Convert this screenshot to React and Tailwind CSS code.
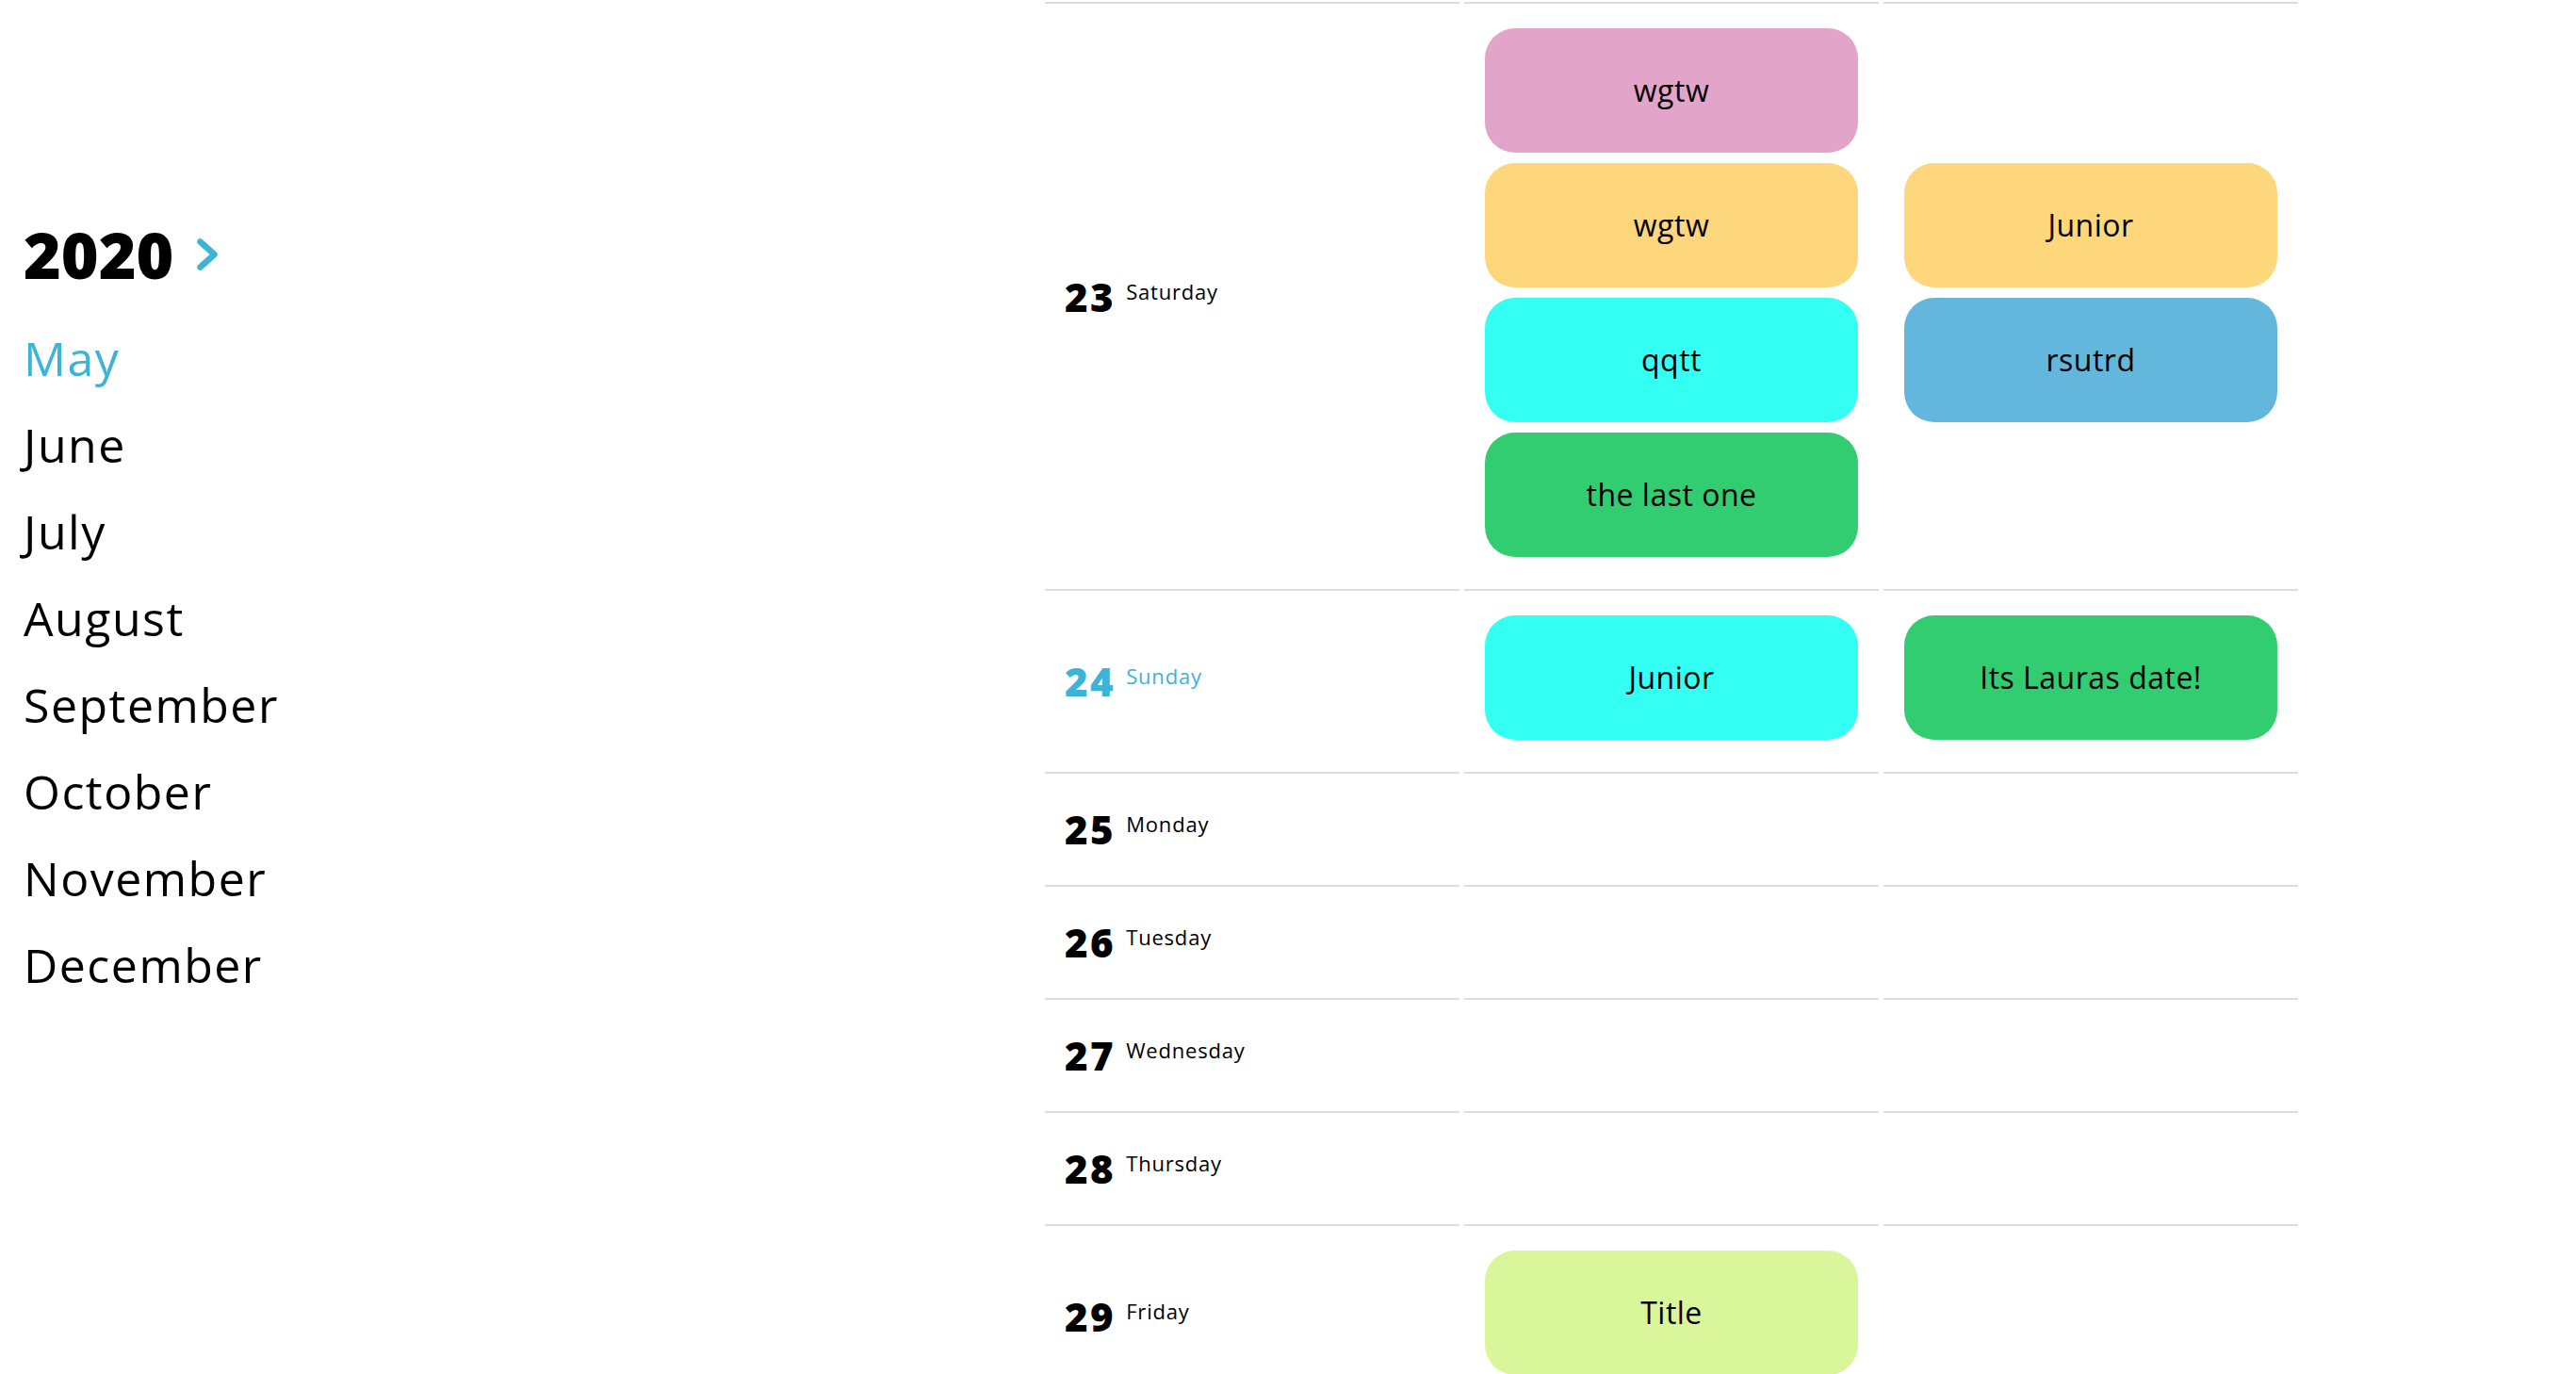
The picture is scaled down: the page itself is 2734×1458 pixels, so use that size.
import React from 'react';

const MONTHS = ["May", "June", "July", "August", "September", "October", "November", "December"];

const COLORS = {
  pink: "bg-[#e2a5c9]",
  yellow: "bg-[#fed67c]",
  cyan: "bg-[#33fff3]",
  green: "bg-[#33cd71]",
  blue: "bg-[#63b7dc]",
  lime: "bg-[#d9f79a]",
};

const DAYS = [
  {
    num: 23,
    name: "Saturday",
    cols: [
      [
        { title: "wgtw", color: "pink" },
        { title: "wgtw", color: "yellow" },
        { title: "qqtt", color: "cyan" },
        { title: "the last one", color: "green" },
      ],
      [
        { title: "Junior", color: "yellow" },
        { title: "rsutrd", color: "blue" },
      ],
    ],
  },
  {
    num: 24,
    name: "Sunday",
    today: true,
    cols: [
      [{ title: "Junior", color: "cyan" }],
      [{ title: "Its Lauras date!", color: "green" }],
    ],
  },
  { num: 25, name: "Monday", cols: [[], []] },
  { num: 26, name: "Tuesday", cols: [[], []] },
  { num: 27, name: "Wednesday", cols: [[], []] },
  { num: 28, name: "Thursday", cols: [[], []] },
  { num: 29, name: "Friday", cols: [[{ title: "Title", color: "lime" }], []] },
];

function Chevron() {
  return (
    <svg width="24" height="36" viewBox="0 0 24 36" fill="none">
      <polyline
        points="4.5,4.5 19.5,18 4.5,31.5"
        stroke="#3bb4d8"
        strokeWidth="6.5"
        strokeLinecap="round"
        strokeLinejoin="round"
      />
    </svg>
  );
}

function Sidebar() {
  return (
    <aside className="w-[1109px] shrink-0 pl-[25px] pt-[236px]">
      <div className="flex items-center gap-[24px]">
        <h1 className="text-[68px] leading-none font-extrabold text-black">2020</h1>
        <Chevron />
      </div>
      <ul className="mt-[30px]">
        {MONTHS.map((m, i) => (
          <li
            key={m}
            className={`text-[50px] leading-[92px] tracking-[1.5px] ${i === 0 ? "text-[#3bb4d8]" : "text-black"}`}
          >
            {m}
          </li>
        ))}
      </ul>
    </aside>
  );
}

function EventCell({ events }) {
  return (
    <div className="min-h-[120px] border-t-2 border-[#dddddd] px-[22px] pt-[26px] pb-[34px] flex flex-col justify-center gap-[11px]">
      {events.map((e, i) => (
        <div
          key={i}
          className={`h-[132px] shrink-0 rounded-[32px] flex items-center justify-center text-[32px] tracking-[0.5px] text-black ${COLORS[e.color]}`}
        >
          {e.title}
        </div>
      ))}
    </div>
  );
}

function DayRow({ day }) {
  const tone = day.today ? "text-[#3bb4d8]" : "text-black";
  return (
    <>
      <div className="min-h-[120px] border-t-2 border-[#dddddd] pl-[21px] flex items-center">
        <div className={`flex items-start ${tone}`}>
          <span className="text-[42px] leading-none font-extrabold tracking-[2.5px]">{day.num}</span>
          <span className="ml-[11px] mt-[4px] text-[22px] leading-none tracking-[0.8px]">{day.name}</span>
        </div>
      </div>
      {day.cols.map((events, i) => (
        <EventCell key={i} events={events} />
      ))}
    </>
  );
}

export default function App() {
  return (
    <div className="flex h-[1458px] w-[2734px] overflow-hidden bg-white font-['Open_Sans',sans-serif]">
      <Sidebar />
      <main className="pt-[2px]">
        <div className="grid grid-cols-[440px_440px_440px] gap-x-[5px]">
          {DAYS.map((d) => (
            <DayRow key={d.num} day={d} />
          ))}
        </div>
      </main>
    </div>
  );
}
